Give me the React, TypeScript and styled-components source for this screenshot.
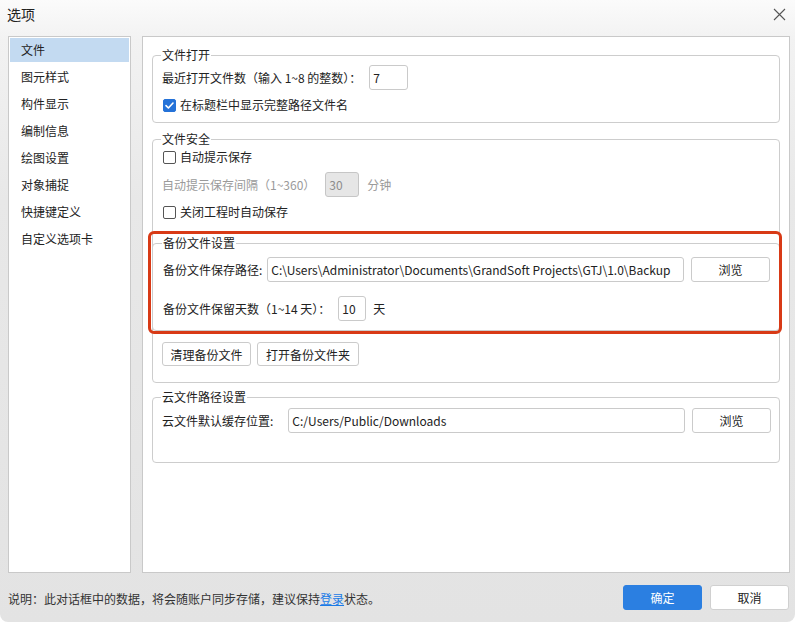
import styled, { createGlobalStyle } from "styled-components";

const GlobalStyle = createGlobalStyle`
  html, body {
    margin: 0;
    padding: 0;
    background: #ffffff;
  }
  body {
    font-family: "Noto Sans CJK SC", "Liberation Sans", sans-serif;
    font-size: 12px;
    color: #222222;
  }
  * {
    box-sizing: border-box;
  }
`;

const menu = [
  "文件",
  "图元样式",
  "构件显示",
  "编制信息",
  "绘图设置",
  "对象捕捉",
  "快捷键定义",
  "自定义选项卡",
];

const Window = styled.div`
  width: 795px;
  height: 622px;
  display: flex;
  flex-direction: column;
  border-radius: 0 0 8px 8px;
  background: linear-gradient(
    to bottom,
    #fbfbfb 0px,
    #f2f2f2 40px,
    #e8e8e8 200px,
    #e3e3e3 100%
  );
  overflow: hidden;
`;

const TitleBar = styled.div`
  height: 32px;
  flex-shrink: 0;
  display: flex;
  align-items: center;
  justify-content: space-between;
  padding: 0 8px 0 7px;
`;

const Title = styled.div`
  font-size: 14px;
  line-height: 18px;
  color: #222;
  margin-top: -4px;
`;

const CloseButton = styled.div`
  width: 16px;
  height: 16px;
  display: flex;
  align-items: center;
  justify-content: center;
  margin-top: -4px;
`;

const Body = styled.div`
  display: flex;
  gap: 11px;
  padding: 4px 5px 0 8px;
  flex-shrink: 0;
`;

const Sidebar = styled.div`
  width: 123px;
  height: 537px;
  background: #fff;
  border: 1px solid #c9c9c9;
  padding: 1px;
  display: flex;
  flex-direction: column;
  gap: 3px;
`;

const MenuItem = styled.div<{ $active?: boolean }>`
  height: 24px;
  line-height: 24px;
  padding-left: 11px;
  font-size: 12px;
  color: #222;
  background: ${(p) => (p.$active ? "#c3daf1" : "transparent")};
`;

const Main = styled.div`
  flex: 1;
  height: 537px;
  background: #fff;
  border: 1px solid #c9c9c9;
  padding: 10px 9px 0 9px;
  display: flex;
  flex-direction: column;
`;

const Group = styled.fieldset<{ $pb: number; $mt?: number }>`
  margin: ${(p) => p.$mt ?? 0}px 0 0 0;
  padding: 0 8px ${(p) => p.$pb}px 9px;
  border: 1px solid #cdcdcd;
  border-radius: 4px;
  min-width: 0;
`;

const Legend = styled.legend`
  padding: 0 1px;
  margin-left: -1px;
  font-size: 12px;
  line-height: 16px;
  color: #222;
`;

const GroupBody = styled.div<{ $pt?: number }>`
  display: flex;
  flex-direction: column;
  padding-top: ${(p) => p.$pt ?? 0}px;
`;

const Row = styled.div<{ $h: number; $mt?: number }>`
  display: flex;
  align-items: center;
  height: ${(p) => p.$h}px;
  margin-top: ${(p) => p.$mt ?? 0}px;
`;

const Label = styled.span<{ $disabled?: boolean; $ml?: number }>`
  font-size: 12px;
  line-height: 16px;
  white-space: nowrap;
  margin-left: ${(p) => p.$ml ?? 0}px;
  color: ${(p) => (p.$disabled ? "#9a9a9a" : "#222")};
`;

const TextBox = styled.div<{ $w?: number; $ml?: number; $disabled?: boolean }>`
  ${(p) => (p.$w ? `width: ${p.$w}px;` : "flex: 1;")}
  min-width: 0;
  height: 25px;
  margin-left: ${(p) => p.$ml ?? 0}px;
  border: 1px solid ${(p) => (p.$disabled ? "#c6c6c6" : "#cacaca")};
  border-radius: 3px;
  background: ${(p) => (p.$disabled ? "#e6e6e6" : "#fff")};
  color: ${(p) => (p.$disabled ? "#8c8c8c" : "#222")};
  padding-left: 3px;
  font-size: 12px;
  line-height: 23px;
  white-space: nowrap;
  overflow: hidden;
`;

const Button = styled.div<{ $w: number; $ml?: number; $h?: number }>`
  width: ${(p) => p.$w}px;
  height: ${(p) => p.$h ?? 25}px;
  margin-left: ${(p) => p.$ml ?? 0}px;
  border: 1px solid #cbcbcb;
  border-radius: 3px;
  background: #fff;
  display: flex;
  align-items: center;
  justify-content: center;
  font-size: 12px;
  color: #222;
  flex-shrink: 0;
`;

const CheckRow = styled.label`
  display: flex;
  align-items: center;
  gap: 4px;
  margin-left: 1px;
`;

const Box = styled.span<{ $checked?: boolean }>`
  width: 13px;
  height: 13px;
  border-radius: 2px;
  border: 1px solid ${(p) => (p.$checked ? "#2472d8" : "#555")};
  background: ${(p) => (p.$checked ? "#2472d8" : "#fff")};
  display: flex;
  align-items: center;
  justify-content: center;
`;

const BackupBox = styled.div`
  position: relative;
  margin: 13px -9px 0 -10px;
`;

const RedMark = styled.div`
  position: absolute;
  top: -4px;
  left: -4px;
  right: -2px;
  bottom: -3px;
  border: 3px solid #d83a16;
  border-radius: 6px;
  pointer-events: none;
`;

const SubGroup = styled.fieldset`
  margin: 0;
  padding: 0 9px 9px 10px;
  border: 1px solid #cdcdcd;
  border-radius: 4px;
  min-width: 0;
`;

const Footer = styled.div`
  flex: 1;
  display: flex;
  align-items: center;
  padding: 0 6px 0 8px;
`;

const Note = styled.div`
  flex: 1;
  font-size: 12px;
  color: #333;
  margin-top: 2px;
`;

const Link = styled.span`
  color: #1a7ae6;
  text-decoration: underline;
`;

const DialogButton = styled.div<{ $primary?: boolean }>`
  width: 79px;
  height: 25px;
  border-radius: 3px;
  margin-left: 8px;
  display: flex;
  align-items: center;
  justify-content: center;
  font-size: 12px;
  background: ${(p) => (p.$primary ? "#2b7fe1" : "#fff")};
  color: ${(p) => (p.$primary ? "#fff" : "#222")};
  border: 1px solid ${(p) => (p.$primary ? "#2b7fe1" : "#d0d0d0")};
`;

const Check = ({ checked, label }: { checked?: boolean; label: string }) => (
  <CheckRow>
    <Box $checked={checked}>
      {checked && (
        <svg width="11" height="11" viewBox="0 0 11 11">
          <path
            d="M2 5.6 L4.4 8 L9 3"
            fill="none"
            stroke="#fff"
            strokeWidth="1.6"
            strokeLinecap="round"
            strokeLinejoin="round"
          />
        </svg>
      )}
    </Box>
    <Label>{label}</Label>
  </CheckRow>
);

const App = () => {
  return (
    <>
      <GlobalStyle />
      <Window>
        <TitleBar>
          <Title>选项</Title>
          <CloseButton>
            <svg width="13" height="13" viewBox="0 0 13 13">
              <path
                d="M1 1 L12 12 M12 1 L1 12"
                stroke="#555"
                strokeWidth="1.1"
                fill="none"
              />
            </svg>
          </CloseButton>
        </TitleBar>
        <Body>
          <Sidebar>
            {menu.map((item, index) => (
              <MenuItem key={index} $active={index === 0}>
                {item}
              </MenuItem>
            ))}
          </Sidebar>
          <Main>
            <Group $pb={7}>
              <Legend>文件打开</Legend>
              <GroupBody $pt={2}>
                <Row $h={25}>
                  <Label>最近打开文件数（输入 1~8 的整数）：</Label>
                  <TextBox $w={39} $ml={8}>
                    7
                  </TextBox>
                </Row>
                <Row $h={20} $mt={5}>
                  <Check checked label="在标题栏中显示完整路径文件名" />
                </Row>
              </GroupBody>
            </Group>

            <Group $pb={16} $mt={8}>
              <Legend>文件安全</Legend>
              <GroupBody>
                <Row $h={20}>
                  <Check label="自动提示保存" />
                </Row>
                <Row $h={25} $mt={5}>
                  <Label $disabled>自动提示保存间隔（1~360）</Label>
                  <TextBox $w={34} $ml={10} $disabled>
                    30
                  </TextBox>
                  <Label $disabled $ml={8}>
                    分钟
                  </Label>
                </Row>
                <Row $h={20} $mt={5}>
                  <Check label="关闭工程时自动保存" />
                </Row>

                <BackupBox>
                  <SubGroup>
                    <Legend>备份文件设置</Legend>
                    <GroupBody>
                      <Row $h={25} $mt={6}>
                        <Label>备份文件保存路径:</Label>
                        <TextBox $ml={5}>
                          C:\Users\Administrator\Documents\GrandSoft
                          Projects\GTJ\1.0\Backup
                        </TextBox>
                        <Button $w={79} $ml={7}>
                          浏览
                        </Button>
                      </Row>
                      <Row $h={25} $mt={14}>
                        <Label>备份文件保留天数（1~14 天）：</Label>
                        <TextBox $w={28} $ml={8}>
                          10
                        </TextBox>
                        <Label $ml={7}>天</Label>
                      </Row>
                    </GroupBody>
                  </SubGroup>
                  <RedMark />
                </BackupBox>

                <Row $h={24} $mt={11}>
                  <Button $w={89} $h={24}>
                    清理备份文件
                  </Button>
                  <Button $w={102} $h={24} $ml={6}>
                    打开备份文件夹
                  </Button>
                </Row>
              </GroupBody>
            </Group>

            <Group $pb={29} $mt={6}>
              <Legend>云文件路径设置</Legend>
              <GroupBody>
                <Row $h={25} $mt={3}>
                  <Label>云文件默认缓存位置:</Label>
                  <TextBox $ml={15}>C:/Users/Public/Downloads</TextBox>
                  <Button $w={79} $ml={7}>
                    浏览
                  </Button>
                </Row>
              </GroupBody>
            </Group>
          </Main>
        </Body>
        <Footer>
          <Note>
            说明：此对话框中的数据，将会随账户同步存储，建议保持<Link>登录</Link>
            状态。
          </Note>
          <DialogButton $primary>确定</DialogButton>
          <DialogButton>取消</DialogButton>
        </Footer>
      </Window>
    </>
  );
};

export default App;
